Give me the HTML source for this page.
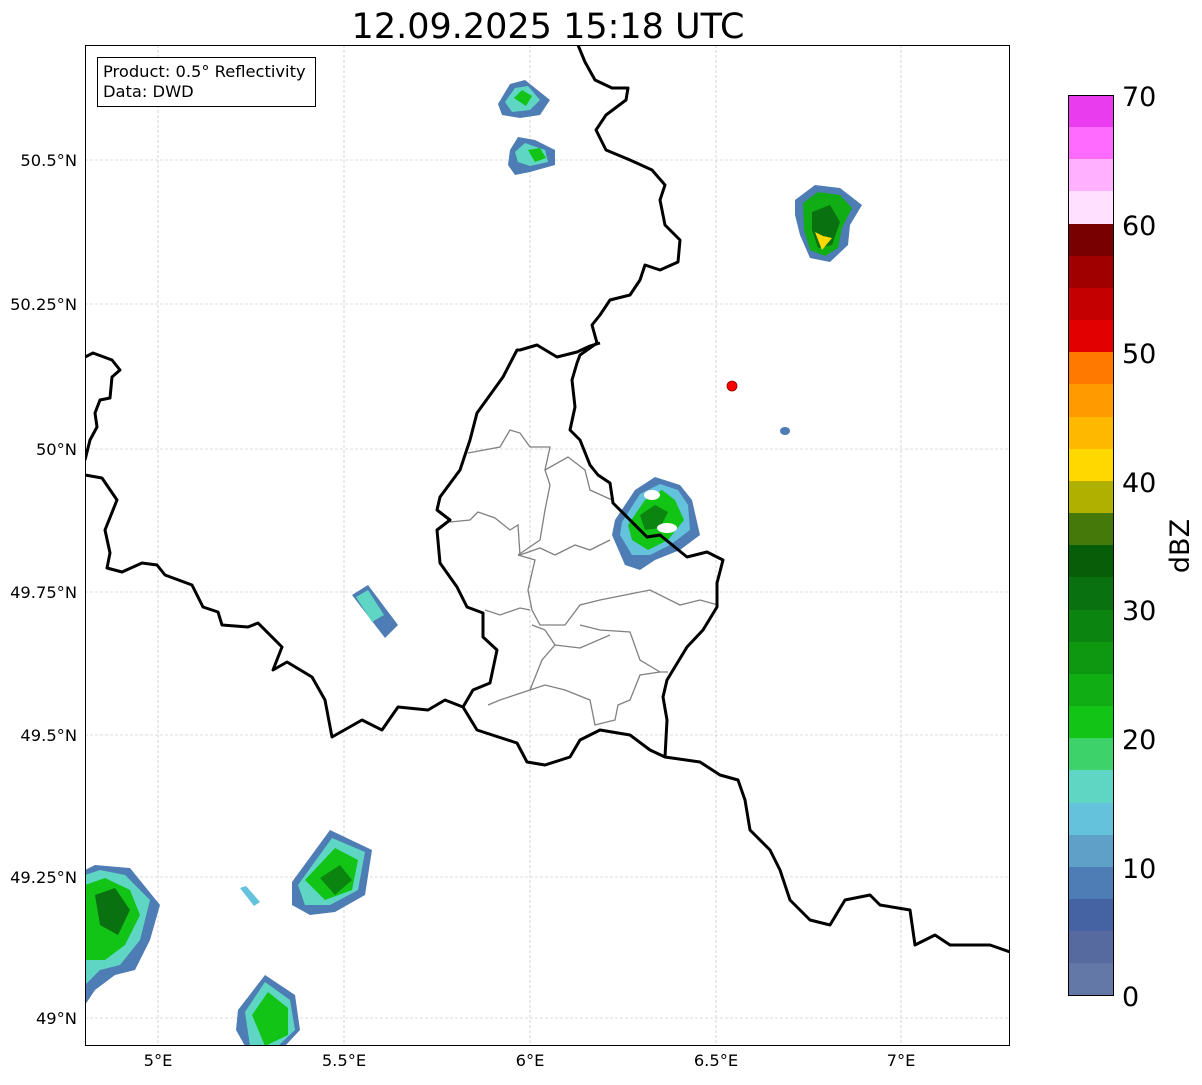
<!DOCTYPE html>
<html><head><meta charset="utf-8"><style>
html,body{margin:0;padding:0;background:#fff;}
body{width:1202px;height:1081px;overflow:hidden;font-family:"DejaVu Sans","Liberation Sans",sans-serif;}
</style></head><body>
<svg width="1202" height="1081" viewBox="0 0 1202 1081" xmlns="http://www.w3.org/2000/svg" font-family="'DejaVu Sans','Liberation Sans',sans-serif">
<rect width="1202" height="1081" fill="#fff"/>
<text x="548" y="38" font-size="35" text-anchor="middle" fill="#000">12.09.2025 15:18 UTC</text>
<defs><clipPath id="ax"><rect x="85" y="45" width="925" height="1001"/></clipPath></defs>
<g clip-path="url(#ax)">
<g stroke="#bbb" stroke-width="0.6" stroke-dasharray="3,2" fill="none">
<line x1="158" y1="45" x2="158" y2="1046"/><line x1="344" y1="45" x2="344" y2="1046"/><line x1="530" y1="45" x2="530" y2="1046"/><line x1="716" y1="45" x2="716" y2="1046"/><line x1="901" y1="45" x2="901" y2="1046"/>
<line x1="85" y1="160" x2="1010" y2="160"/><line x1="85" y1="304" x2="1010" y2="304"/><line x1="85" y1="449" x2="1010" y2="449"/><line x1="85" y1="592" x2="1010" y2="592"/><line x1="85" y1="735" x2="1010" y2="735"/><line x1="85" y1="877" x2="1010" y2="877"/><line x1="85" y1="1018" x2="1010" y2="1018"/>
</g>
<g>
<polygon points="498,104 510,84 525,80 535,88 550,100 540,115 520,118 502,115" fill="#4e7cb4"/>
<polygon points="505,102 515,88 528,86 540,100 530,110 512,112" fill="#5fd6c3"/>
<polygon points="514,98 522,90 532,96 526,106" fill="#12c416"/>
<polygon points="510,150 518,137 535,140 555,150 555,165 530,172 515,175 508,165" fill="#4e7cb4"/>
<polygon points="515,152 525,143 545,150 548,162 530,166 518,162" fill="#5fd6c3"/>
<polygon points="528,150 540,148 546,158 535,162" fill="#12c416"/>
<polygon points="795,200 815,185 840,188 862,205 850,225 848,245 830,262 810,258 800,235 795,215" fill="#4e7cb4"/>
<polygon points="803,203 818,192 840,195 852,208 842,228 838,248 825,256 810,250 804,230" fill="#10ad14"/>
<polygon points="812,212 830,205 840,222 832,245 818,248 812,230" fill="#0a7110"/>
<polygon points="815,232 823,236 832,238 822,250" fill="#ffd800"/>
<polygon points="615,520 635,490 655,477 680,485 692,500 700,535 680,550 655,560 640,570 625,565 612,535" fill="#4e7cb4"/>
<polygon points="622,522 640,494 660,484 678,490 688,505 690,530 670,545 650,555 632,555 620,535" fill="#64c2dc"/>
<polygon points="628,525 645,500 662,490 675,500 684,520 668,540 648,550 632,540" fill="#12c416"/>
<polygon points="640,515 655,505 668,512 660,528 645,530" fill="#0c8510"/>
<ellipse cx="652" cy="495" rx="8" ry="5" fill="#fff"/><ellipse cx="667" cy="528" rx="10" ry="5" fill="#fff"/>
<polygon points="352,595 368,585 398,625 385,638" fill="#4e7cb4"/>
<polygon points="356,597 368,590 384,615 372,622" fill="#5fd6c3"/>
<ellipse cx="785" cy="431" rx="5" ry="4" fill="#4e7cb4"/>
<polygon points="292,882 330,830 372,850 365,895 335,912 310,915 292,905" fill="#4e7cb4"/>
<polygon points="298,885 332,838 365,852 358,890 330,905 305,905" fill="#5fd6c3"/>
<polygon points="305,880 335,848 358,860 352,890 325,900" fill="#12c416"/>
<polygon points="320,878 340,865 352,880 335,895" fill="#0c8510"/>
<polygon points="240,888 246,886 260,902 254,906" fill="#64c2dc"/>
<polygon points="85,870 95,865 130,868 160,905 150,940 135,970 115,975 95,990 85,1005" fill="#4e7cb4"/>
<polygon points="85,875 100,870 125,875 150,900 140,940 120,965 100,970 85,985" fill="#5fd6c3"/>
<polygon points="85,885 105,878 130,890 140,915 125,945 105,960 85,960" fill="#12c416"/>
<polygon points="95,895 115,888 130,910 118,935 100,925" fill="#0a7110"/>
<polygon points="238,1010 265,975 295,995 300,1030 285,1046 245,1046 236,1030" fill="#4e7cb4"/>
<polygon points="245,1012 265,982 290,1000 295,1030 278,1046 250,1046" fill="#5fd6c3"/>
<polygon points="252,1015 268,992 288,1008 288,1035 265,1046" fill="#12c416"/>
</g>
<g stroke="#808080" stroke-width="1.3" fill="none">
<polyline points="468,453 500,447 510,430 520,433 530,447 550,447 545,470 550,485 545,510 540,540 518,555"/>
<polyline points="545,470 568,457 585,470 590,490 612,500"/>
<polyline points="450,522 470,520 478,512 495,518 510,530 518,525 520,555 540,548 555,555 575,545 590,550 610,540"/>
<polyline points="518,555 535,560 528,590 532,610 540,625 565,625 580,605 600,600 625,595 650,590 680,605 700,600 718,605"/>
<polyline points="485,610 500,615 520,608 530,610"/>
<polyline points="532,625 545,630 555,645 542,660 530,690 545,685 565,690 590,700 595,725 615,720 618,705 630,700 640,675 660,672 668,672"/>
<polyline points="488,705 500,700 530,690"/>
<polyline points="580,625 600,630 630,632 640,660 660,672"/>
<polyline points="555,645 580,648 610,635"/>
</g>
<g stroke="#000" stroke-width="3" fill="none" stroke-linejoin="round">
<polyline points="578,45 585,62 595,80 612,88 628,88 626,100 606,115 596,130 606,150 630,160 652,170 665,185 660,200 665,225 680,240 678,262 660,270 645,265 640,280 630,295 610,300 600,315 592,325 597,343 580,355 577,363 572,380 575,407 570,430 580,440 590,465 598,475 610,483 613,503 630,520 647,537 660,535 687,557 707,552 723,560 717,583 717,607 703,630 687,647 667,680 663,697 667,720 665,757"/>
<polyline points="600,343 590,346 577,352 557,357 537,345 520,350 517,350 503,377 477,413 470,440 460,470 440,497 437,510 450,520 437,530 440,563 457,587 467,607 483,613 483,637 497,650 490,683 473,690 463,707 477,730 517,743 527,762 545,765 570,757 580,740 600,730 630,735 650,750 665,757 700,762 720,775 738,780 745,800 750,830 770,850 780,870 790,900 810,920 830,925 845,900 870,895 880,905 910,910 915,945 935,935 950,945 990,945 1010,952"/>
<polyline points="85,475 102,478 117,500 105,530 110,553 107,568 122,572 142,563 157,565 165,575 192,585 203,607 218,612 222,625 248,627 258,623 282,647 273,670 287,662 312,677 325,700 332,737 362,720 382,730 398,707 428,710 445,700 463,707"/>
<polyline points="85,357 93,353 112,360 120,370 112,377 110,398 100,400 95,413 97,427 90,440 85,460"/>
</g>
<circle cx="732" cy="386" r="5" fill="#f00" stroke="#800" stroke-width="0.8"/>
</g>
<rect x="85.5" y="45.5" width="924" height="1000" fill="none" stroke="#000" stroke-width="1"/>
<rect x="97.5" y="57.5" width="218" height="49" fill="#fff" stroke="#000" stroke-width="1"/>
<text x="103" y="77" font-size="16.3">Product: 0.5° Reflectivity</text>
<text x="103" y="97" font-size="16.3">Data: DWD</text>
<g font-size="16.3" fill="#000">
<g text-anchor="end"><text x="77" y="166">50.5°N</text><text x="77" y="310">50.25°N</text><text x="77" y="455">50°N</text><text x="77" y="598">49.75°N</text><text x="77" y="741">49.5°N</text><text x="77" y="883">49.25°N</text><text x="77" y="1024">49°N</text></g>
<g text-anchor="middle"><text x="158" y="1066">5°E</text><text x="344" y="1066">5.5°E</text><text x="530" y="1066">6°E</text><text x="716" y="1066">6.5°E</text><text x="901" y="1066">7°E</text></g>
</g>
<g stroke="none">
<rect x="1068" y="95" width="46" height="33" fill="#e93cee"/>
<rect x="1068" y="127" width="46" height="33" fill="#ff6aff"/>
<rect x="1068" y="159" width="46" height="33" fill="#ffb1ff"/>
<rect x="1068" y="191" width="46" height="33" fill="#ffe0ff"/>
<rect x="1068" y="224" width="46" height="33" fill="#780000"/>
<rect x="1068" y="256" width="46" height="33" fill="#a00000"/>
<rect x="1068" y="288" width="46" height="33" fill="#c40000"/>
<rect x="1068" y="320" width="46" height="33" fill="#e20000"/>
<rect x="1068" y="352" width="46" height="33" fill="#ff7800"/>
<rect x="1068" y="384" width="46" height="33" fill="#ff9b00"/>
<rect x="1068" y="417" width="46" height="33" fill="#ffb800"/>
<rect x="1068" y="449" width="46" height="33" fill="#ffd800"/>
<rect x="1068" y="481" width="46" height="33" fill="#b0b000"/>
<rect x="1068" y="513" width="46" height="33" fill="#457a0a"/>
<rect x="1068" y="545" width="46" height="33" fill="#085e08"/>
<rect x="1068" y="577" width="46" height="33" fill="#0a7110"/>
<rect x="1068" y="610" width="46" height="33" fill="#0c8510"/>
<rect x="1068" y="642" width="46" height="33" fill="#0e9812"/>
<rect x="1068" y="674" width="46" height="33" fill="#10ad14"/>
<rect x="1068" y="706" width="46" height="33" fill="#12c416"/>
<rect x="1068" y="738" width="46" height="33" fill="#3dd36a"/>
<rect x="1068" y="770" width="46" height="33" fill="#5fd6c3"/>
<rect x="1068" y="803" width="46" height="33" fill="#64c2dc"/>
<rect x="1068" y="835" width="46" height="33" fill="#5ea0c8"/>
<rect x="1068" y="867" width="46" height="33" fill="#4e7cb4"/>
<rect x="1068" y="899" width="46" height="33" fill="#4562a2"/>
<rect x="1068" y="931" width="46" height="33" fill="#566aa0"/>
<rect x="1068" y="963" width="46" height="33" fill="#6478a8"/>
</g>
<rect x="1068.5" y="95.5" width="45" height="900" fill="none" stroke="#000" stroke-width="1"/>
<g font-size="27" fill="#000">
<text x="1122" y="1006">0</text><text x="1122" y="878">10</text><text x="1122" y="749">20</text><text x="1122" y="620">30</text><text x="1122" y="492">40</text><text x="1122" y="363">50</text><text x="1122" y="235">60</text><text x="1122" y="106">70</text>
</g>
<text transform="translate(1189,546) rotate(-90)" font-size="27" text-anchor="middle">dBZ</text>
</svg>
</body></html>
